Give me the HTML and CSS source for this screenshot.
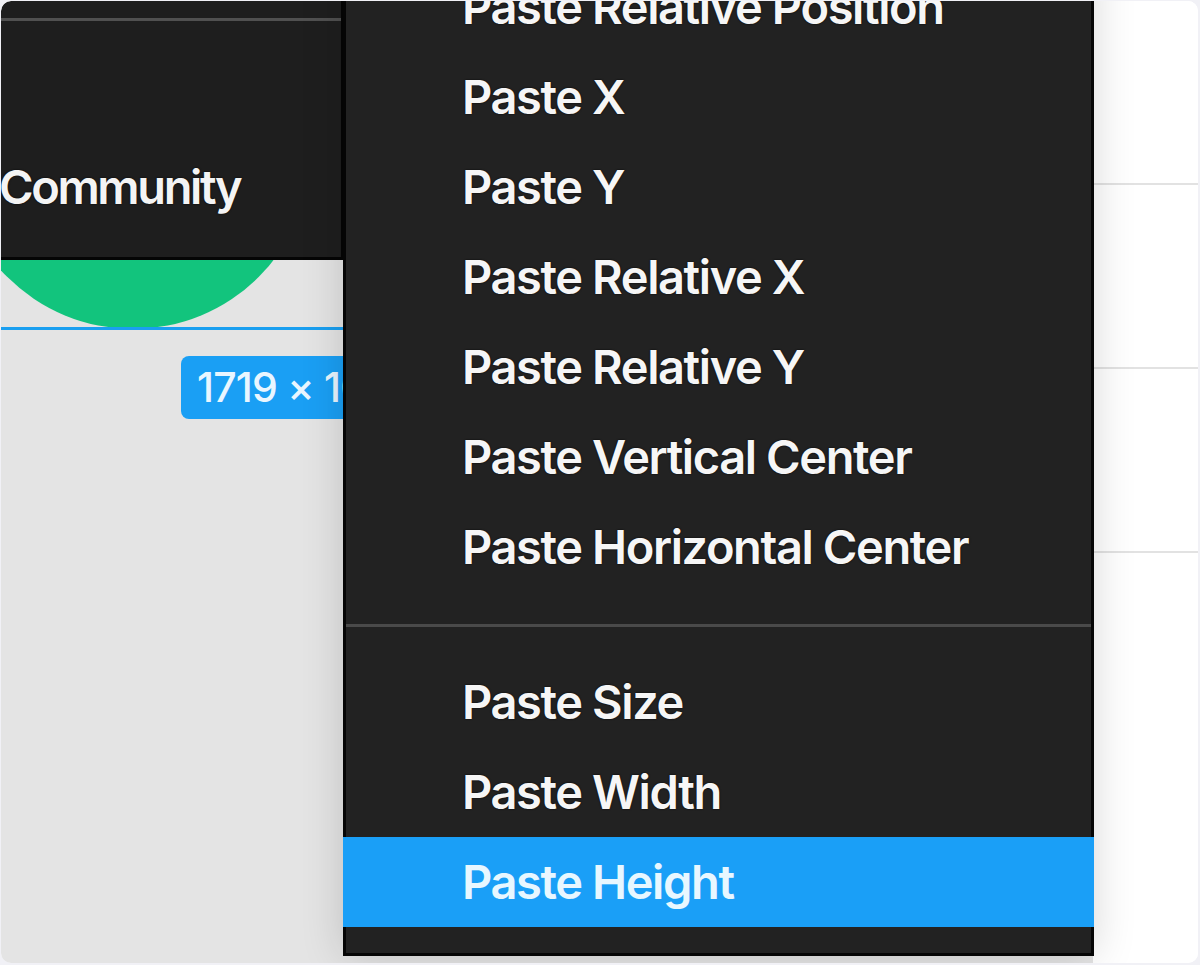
FILE: index.html
```html
<!DOCTYPE html>
<html lang="en">
<head>
<meta charset="utf-8">
<title>Paste menu</title>
<link rel="stylesheet" href="styles.css">
</head>
<body>
<div class="frame">
  <div class="stage">
    <div class="shape-circle"></div>
    <div class="sel-line"></div>
    <div class="size-badge">1719 × 1012</div>
    <div class="main-menu">
      <div class="main-sep"></div>
      <div class="main-item">Community</div>
    </div>
    <div class="ctx-menu">
      <div class="ctx-item">Paste Relative Position</div>
      <div class="ctx-item">Paste X</div>
      <div class="ctx-item">Paste Y</div>
      <div class="ctx-item">Paste Relative X</div>
      <div class="ctx-item">Paste Relative Y</div>
      <div class="ctx-item">Paste Vertical Center</div>
      <div class="ctx-item">Paste Horizontal Center</div>
      <div class="ctx-sep"></div>
      <div class="ctx-item">Paste Size</div>
      <div class="ctx-item">Paste Width</div>
      <div class="ctx-item ctx-item--active">Paste Height</div>
    </div>
  </div>
  <div class="panel">
    <div class="panel-row"></div>
    <div class="panel-row"></div>
    <div class="panel-row"></div>
    <div class="panel-row panel-row--last"></div>
  </div>
</div>
</body>
</html>
```
FILE: styles.css
```css
* { box-sizing: border-box; }

html, body {
  margin: 0;
  padding: 0;
  background: #f1f1f6;
  font-family: Inter, "Noto Sans", "Liberation Sans", sans-serif;
}

.frame {
  margin: 1px;
  width: 1197px;
  height: 962px;
  border-radius: 10px;
  overflow: hidden;
  display: flex;
  background: #ffffff;
}

.stage {
  position: relative;
  width: 1092px;
  flex: none;
  background: #e4e4e4;
}

.shape-circle {
  position: absolute;
  left: -46px;
  top: -28px;
  width: 356px;
  height: 356px;
  border-radius: 50%;
  background: #12c47d;
}

.sel-line {
  position: absolute;
  left: 0;
  top: 326px;
  width: 345px;
  height: 3px;
  background: #1a9ff0;
}

.size-badge {
  position: absolute;
  left: 180px;
  top: 355px;
  height: 63px;
  padding: 0 16px;
  border-radius: 8px;
  background: #1a9ff4;
  color: #e9f6ff;
  font-size: 41px;
  font-weight: 500;
  line-height: 63px;
  letter-spacing: -0.8px;
  white-space: nowrap;
}

.main-menu {
  position: absolute;
  left: 0;
  top: 0;
  width: 343px;
  height: 259px;
  background: #1e1e1e;
  border-right: 3px solid #050505;
  border-bottom: 3px solid #050505;
  border-top-left-radius: 10px;
}

.main-sep {
  margin-top: 17px;
  height: 3px;
  background: #505050;
}

.main-item {
  margin-top: 126px;
  margin-left: -2px;
  color: #f4f4f4;
  font-size: 47px;
  font-weight: 600;
  line-height: 80px;
  height: 80px;
  letter-spacing: -2.4px;
  text-shadow: 0 0 2px #000;
  white-space: nowrap;
}

.ctx-menu {
  position: absolute;
  left: 342px;
  top: -39px;
  width: 751px;
  background: #222222;
  border-left: 3px solid #050505;
  border-right: 3px solid #050505;
  border-bottom: 3px solid #050505;
  padding-bottom: 26px;
  box-shadow: 0 0 40px rgba(0, 0, 0, 0.16);
}

.ctx-item {
  height: 90px;
  line-height: 90px;
  padding-left: 116px;
  color: #f6f6f6;
  font-size: 47px;
  font-weight: 600;
  letter-spacing: -1.4px;
  text-shadow: 0 0 2px #000;
  white-space: nowrap;
}

.ctx-item--active {
  margin: 0 -3px;
  padding-left: 119px;
  background: #1a9ff7;
  color: #e8f7ff;
  text-shadow: none;
}

.ctx-sep {
  margin: 32px 0 30px;
  height: 3px;
  background: #4a4a4a;
}

.panel {
  flex: 1;
  display: flex;
  flex-direction: column;
  background: #ffffff;
}

.panel-row {
  height: 184px;
  border-bottom: 2px solid #e2e2e2;
  flex: none;
}

.panel-row--last {
  border-bottom: none;
  flex: 1;
}
```
